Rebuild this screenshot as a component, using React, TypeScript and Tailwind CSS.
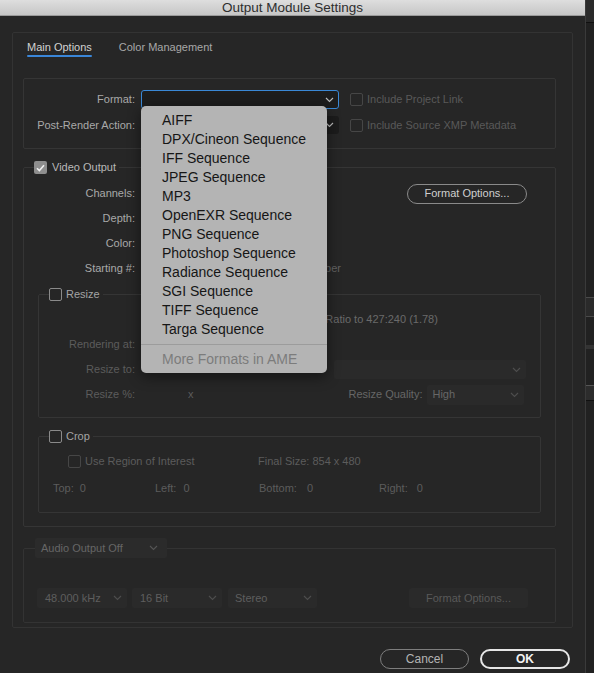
import React from 'react';

type BoxState = 'checked' | 'active' | 'disabled';

const Box = ({ state }: { state: BoxState }) => {
  if (state === 'checked') {
    return (
      <span className="flex h-[13px] w-[13px] shrink-0 items-center justify-center rounded-[2px] bg-[#8e8e8e]">
        <svg width="9" height="8" viewBox="0 0 9 8">
          <path d="M1 4.2 3.4 6.6 8 1.2" fill="none" stroke="#f0f0f0" strokeWidth="1.6" />
        </svg>
      </span>
    );
  }
  return (
    <span
      className={`h-[13px] w-[13px] shrink-0 rounded-[2px] border ${
        state === 'active' ? 'border-[#8a8a8a]' : 'border-[#464646]'
      }`}
    />
  );
};

const Chevron = ({ color = '#a0a0a0' }: { color?: string }) => (
  <svg width="9" height="6" viewBox="0 0 9 6" className="shrink-0">
    <path d="M1 1l3.5 3.5L8 1" fill="none" stroke={color} strokeWidth="1.1" />
  </svg>
);

const formats = [
  'AIFF',
  'DPX/Cineon Sequence',
  'IFF Sequence',
  'JPEG Sequence',
  'MP3',
  'OpenEXR Sequence',
  'PNG Sequence',
  'Photoshop Sequence',
  'Radiance Sequence',
  'SGI Sequence',
  'TIFF Sequence',
  'Targa Sequence',
];

const FormatMenu = () => (
  <div className="absolute left-0 top-[16px] z-10 w-[186px] rounded-[5px] bg-[#b4b4b4] pb-[4px] pt-[5px] shadow-[0_4px_14px_rgba(0,0,0,0.45)] font-['Liberation_Sans',Arial,sans-serif]">
    {formats.map((f) => (
      <div key={f} className="h-[19px] pl-[21px] text-[14px] leading-[19px] text-[#161616]">
        {f}
      </div>
    ))}
    <div className="mt-[5px] h-px bg-[#9c9c9c]" />
    <div className="mt-[5px] h-[19px] pl-[21px] text-[14px] leading-[19px] text-[#7c7c7c]">
      More Formats in AME
    </div>
  </div>
);

const Label = ({ w, dim, children }: { w: string; dim?: boolean; children: React.ReactNode }) => (
  <div className={`${w} shrink-0 text-right ${dim ? 'text-[#5c5c5c]' : 'text-[#a9a9a9]'}`}>{children}</div>
);

export default function App() {
  return (
    <div className="flex h-[673px] w-[594px] overflow-hidden bg-[#1e1e1e] text-[11px] leading-[13px] font-['Liberation_Sans',Arial,sans-serif]">
      <div className="flex h-[673px] w-[585px] shrink-0 flex-col bg-[#262626]">
        {/* title bar */}
        <div className="flex h-[16px] shrink-0 items-center justify-center border-b border-[#9a9a9a] bg-gradient-to-b from-[#dedede] to-[#c6c6c6] text-[13.5px] leading-[15px] text-[#2e2e2e]">
          Output Module Settings
        </div>

        <div className="px-[12px] pt-[16px]">
          <div className="rounded-[2px] border border-[#333333] pb-[4px] pl-[10px] pr-[13px]">
            {/* tabs */}
            <div className="flex gap-[27px] pl-[4px] pt-[8px]">
              <div className="flex flex-col">
                <span className="text-[#d2d2d2] leading-[12px]">Main Options</span>
                <span className="mt-[2px] h-[2px] rounded-full bg-[#3a86d8]" />
              </div>
              <span className="text-[#a8a8a8] leading-[12px]">Color Management</span>
            </div>

            {/* format box */}
            <div className="mt-[21px] w-[533px] rounded-[2px] border border-[#353535] pb-[14px] pt-[11px]">
              <div className="flex h-[19px] items-center">
                <Label w="w-[111px]">Format:</Label>
                <div className="relative ml-[6px]">
                  <div className="flex h-[19px] w-[198px] items-center justify-end rounded-[3px] border border-[#3a88d6] bg-[#1d1d1d] pr-[4px]">
                    <Chevron color="#bdbdbd" />
                  </div>
                  <FormatMenu />
                </div>
                <div className="ml-[11px] flex items-center gap-[4px] text-[#595959]">
                  <Box state="disabled" />
                  <span>Include Project Link</span>
                </div>
              </div>
              <div className="mt-[7px] flex h-[18px] items-center">
                <Label w="w-[111px]">Post-Render Action:</Label>
                <div className="ml-[6px] flex h-[18px] w-[198px] items-center justify-end rounded-[3px] bg-[#1c1c1c] pr-[5px]">
                  <Chevron color="#bdbdbd" />
                </div>
                <div className="ml-[11px] flex items-center gap-[4px] text-[#595959]">
                  <Box state="disabled" />
                  <span>Include Source XMP Metadata</span>
                </div>
              </div>
            </div>

            {/* video output */}
            <fieldset className="mt-[12px] w-[533px] rounded-[2px] border border-[#353535] pb-[13px]">
              <legend className="ml-[10px] pr-[3px]">
                <span className="flex h-[13px] items-center gap-[5px] text-[#b8b8b8]">
                  <Box state="checked" />
                  Video Output
                </span>
              </legend>
              <div className="pt-[7px]">
                <div className="flex h-[25px] items-center">
                  <Label w="w-[111px]">Channels:</Label>
                  <button className="ml-auto mr-[28px] h-[20px] w-[120px] rounded-full border-[1.5px] border-[#8a8a8a] text-[11px] text-[#cfcfcf]">
                    Format Options...
                  </button>
                </div>
                <div className="flex h-[25px] items-center">
                  <Label w="w-[111px]">Depth:</Label>
                </div>
                <div className="flex h-[25px] items-center">
                  <Label w="w-[111px]">Color:</Label>
                </div>
                <div className="flex h-[25px] items-center">
                  <Label w="w-[111px]">Starting #:</Label>
                  <div className="ml-[60px] flex items-center gap-[4px] text-[#626262]">
                    <Box state="disabled" />
                    <span>Use Comp Frame Number</span>
                  </div>
                </div>
              </div>

              {/* resize */}
              <fieldset className="mx-[14px] mt-[7px] rounded-[2px] border border-[#353535] pb-[10px]">
                <legend className="ml-[10px] pr-[3px]">
                  <span className="flex h-[13px] items-center gap-[4px] text-[#a4a4a4]">
                    <Box state="active" />
                    Resize
                  </span>
                </legend>
                <div className="pt-[6px]">
                  <div className="flex h-[25px] items-center">
                    <div className="ml-[207px] flex items-center gap-[4px] text-[#6a6a6a]">
                      <Box state="disabled" />
                      <span>Lock Aspect Ratio to 427:240 (1.78)</span>
                    </div>
                  </div>
                  <div className="flex h-[25px] items-center">
                    <Label w="w-[96px]" dim>Rendering at:</Label>
                  </div>
                  <div className="flex h-[25px] items-center">
                    <Label w="w-[96px]" dim>Resize to:</Label>
                    <div className="ml-auto mr-[14px] flex h-[19px] w-[192px] items-center justify-end rounded-[2px] bg-[#2a2a2a] pr-[5px]">
                      <Chevron color="#4e4e4e" />
                    </div>
                  </div>
                  <div className="flex h-[25px] items-center">
                    <Label w="w-[96px]" dim>Resize %:</Label>
                    <span className="ml-[53px] text-[#5c5c5c]">x</span>
                    <span className="ml-[155px] text-[#666666]">Resize Quality:</span>
                    <div className="ml-[5px] flex h-[20px] w-[97px] items-center justify-between rounded-[2px] bg-[#2a2a2a] pl-[5px] pr-[5px] text-[#676767]">
                      <span>High</span>
                      <Chevron color="#4e4e4e" />
                    </div>
                  </div>
                </div>
              </fieldset>

              {/* crop */}
              <fieldset className="mx-[14px] mt-[12px] rounded-[2px] border border-[#353535] pb-[11px]">
                <legend className="ml-[10px] pr-[3px]">
                  <span className="flex h-[13px] items-center gap-[4px] text-[#a4a4a4]">
                    <Box state="active" />
                    Crop
                  </span>
                </legend>
                <div className="pt-[6px] text-[#5c5c5c]">
                  <div className="flex h-[25px] items-center">
                    <div className="ml-[29px] flex w-[190px] items-center gap-[4px]">
                      <Box state="disabled" />
                      <span>Use Region of Interest</span>
                    </div>
                    <span>Final Size: 854 x 480</span>
                  </div>
                  <div className="mt-[2px] flex h-[25px] items-center pl-[14px]">
                    <div className="flex w-[102px] gap-[6px]">
                      <span>Top:</span>
                      <span>0</span>
                    </div>
                    <div className="flex w-[104px] gap-[7px]">
                      <span>Left:</span>
                      <span>0</span>
                    </div>
                    <div className="flex w-[120px] gap-[10px]">
                      <span>Bottom:</span>
                      <span>0</span>
                    </div>
                    <div className="flex gap-[9px]">
                      <span>Right:</span>
                      <span>0</span>
                    </div>
                  </div>
                </div>
              </fieldset>
            </fieldset>

            {/* audio */}
            <fieldset className="mt-[11px] w-[533px] rounded-[2px] border border-[#333333] pb-[14px]">
              <legend className="ml-[11px]">
                <span className="flex h-[20px] w-[132px] items-center justify-between rounded-[2px] bg-[#2b2b2b] pl-[6px] pr-[9px] text-[#666666]">
                  <span>Audio Output Off</span>
                  <Chevron color="#555555" />
                </span>
              </legend>
              <div className="mt-[30px] flex h-[20px] items-center text-[#5e5e5e]">
                <div className="ml-[13px] flex h-[20px] w-[90px] items-center justify-between rounded-[2px] bg-[#2a2a2a] pl-[8px] pr-[5px]">
                  <span>48.000 kHz</span>
                  <Chevron color="#4e4e4e" />
                </div>
                <div className="ml-[5px] flex h-[20px] w-[90px] items-center justify-between rounded-[2px] bg-[#2a2a2a] pl-[8px] pr-[5px]">
                  <span>16 Bit</span>
                  <Chevron color="#4e4e4e" />
                </div>
                <div className="ml-[6px] flex h-[20px] w-[89px] items-center justify-between rounded-[2px] bg-[#2a2a2a] pl-[7px] pr-[5px]">
                  <span>Stereo</span>
                  <Chevron color="#4e4e4e" />
                </div>
                <div className="ml-auto mr-[27px] flex h-[20px] w-[119px] items-center justify-center rounded-[3px] bg-[#2a2a2a] text-[#595959]">
                  Format Options...
                </div>
              </div>
            </fieldset>
          </div>
        </div>

        {/* buttons */}
        <div className="mt-[21px] flex justify-end gap-[11px] pr-[15px]">
          <button className="h-[20px] w-[89px] rounded-full border-[1.5px] border-[#7e7e7e] text-[12px] text-[#b4b4b4]">
            Cancel
          </button>
          <button className="h-[20px] w-[90px] rounded-full border-2 border-[#e6e6e6] text-[12px] font-bold text-[#f2f2f2]">
            OK
          </button>
        </div>
      </div>

      {/* background app strip */}
      <div className="flex w-[9px] flex-col border-l border-[#3a3a3a] bg-[#212121]">
        <div className="h-[23px] border-b border-[#101010] bg-[#2a2a2a]" />
        <div className="h-[274px]" />
        <div className="h-[20px] border-y border-[#4a4a4a] bg-[#2a2a2a]" />
        <div className="h-[28px]" />
        <div className="h-[4px] bg-[#333333]" />
        <div className="h-[36px]" />
        <div className="h-[15px] border-t border-[#555555] bg-[#2c2c2c]" />
        <div className="h-px bg-[#101010]" />
        <div className="flex-1" />
      </div>
    </div>
  );
}
